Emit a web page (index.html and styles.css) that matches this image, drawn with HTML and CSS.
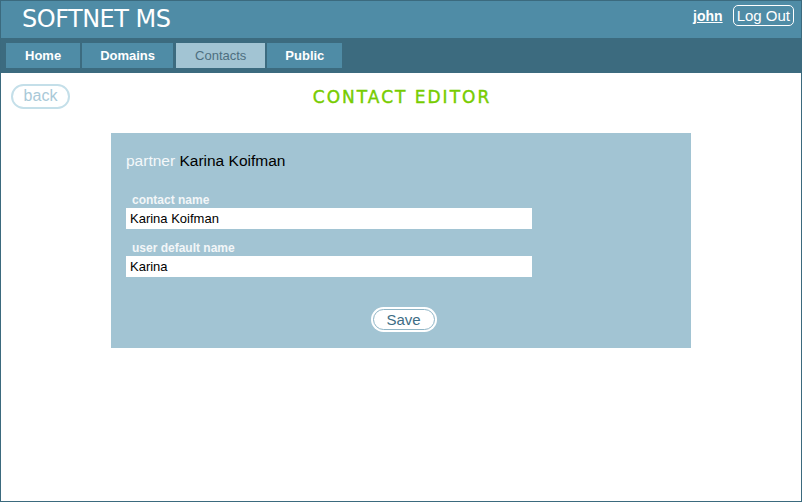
FILE: index.html
```html
<!DOCTYPE html>
<html>
<head>
<meta charset="utf-8">
<title>Softnet MS - Contact Editor</title>
<link rel="stylesheet" href="styles.css">
</head>
<body>
<div class="frame">
  <header class="topbar">
    <div class="brand">SOFTNET MS</div>
    <div class="user">
      <a class="user-name" href="#">john</a>
      <button class="logout">Log Out</button>
    </div>
  </header>
  <nav class="tabs">
    <a class="tab" href="#">Home</a>
    <a class="tab" href="#">Domains</a>
    <a class="tab active" href="#">Contacts</a>
    <a class="tab" href="#">Public</a>
  </nav>
  <main class="content">
    <div class="titlebar">
      <div class="titlebar-left"><button class="back">back</button></div>
      <h1 class="page-title">CONTACT EDITOR</h1>
      <div class="titlebar-right"></div>
    </div>
    <section class="panel">
      <div class="partner"><span class="partner-label">partner</span> Karina Koifman</div>
      <div class="fields">
        <div class="field">
          <label class="field-label">contact name</label>
          <input class="field-input" type="text" value="Karina Koifman">
        </div>
        <div class="field">
          <label class="field-label">user default name</label>
          <input class="field-input" type="text" value="Karina">
        </div>
      </div>
      <div class="actions">
        <button class="save">Save</button>
      </div>
    </section>
  </main>
</div>
</body>
</html>
```

FILE: styles.css
```css
* { box-sizing: border-box; }
html, body { margin: 0; padding: 0; }
body {
  font-family: "Liberation Sans", Arial, sans-serif;
  background: #ffffff;
}
.frame {
  width: 802px;
  height: 502px;
  border: 1px solid #3b6a7e;
  display: flex;
  flex-direction: column;
}
.topbar {
  height: 37px;
  background: #4f8ca6;
  display: flex;
  justify-content: space-between;
  align-items: flex-start;
  padding: 0 7px 0 21px;
}
.brand {
  font-family: "DejaVu Sans", Verdana, sans-serif;
  font-size: 24px;
  letter-spacing: -0.5px;
  line-height: 37px;
  color: #ffffff;
}
.user {
  display: flex;
  align-items: center;
  gap: 10px;
  margin-top: 4px;
}
.user-name {
  color: #ffffff;
  font-weight: bold;
  font-size: 14px;
  text-decoration: underline;
}
.logout {
  font-family: "Liberation Sans", Arial, sans-serif;
  font-size: 15px;
  color: #ffffff;
  background: transparent;
  border: 1px solid #ffffff;
  border-radius: 5px;
  height: 21px;
  padding: 0 3px;
  line-height: 17px;
}
.tabs {
  height: 35px;
  background: #3c6b7f;
  display: flex;
  gap: 2px;
  padding: 5px 5px;
}
.tab {
  height: 25px;
  line-height: 25px;
  background: #4f8ca6;
  color: #ffffff;
  font-weight: bold;
  font-size: 13px;
  text-decoration: none;
  padding: 0 19px;
}
.tab:nth-child(2) { padding: 0 18px; }
.tab.active {
  background: #a2c4d3;
  color: #4d6f80;
  font-weight: normal;
  padding: 0 19px;
  margin-left: 1px;
}
.tab:nth-child(4) { padding: 0 18px; }
.content {
  flex: 1;
  background: #ffffff;
}
.titlebar {
  display: grid;
  grid-template-columns: 1fr auto 1fr;
  align-items: center;
  padding: 10px 10px 0 10px;
}
.back {
  font-family: "Liberation Sans", Arial, sans-serif;
  font-size: 16px;
  color: #a9c9d8;
  background: #ffffff;
  border: 2px solid #c4dfe9;
  border-radius: 13px;
  height: 25px;
  width: 59px;
  padding: 0;
  line-height: 20px;
}
.page-title {
  margin: 0;
  font-family: "DejaVu Sans", Verdana, sans-serif;
  font-weight: normal;
  font-size: 17px;
  letter-spacing: 2px;
  -webkit-text-stroke: 0.4px #77cc00;
  color: #77cc00;
  line-height: 24px;
  padding-top: 2px;
  padding-left: 2px;
}
.panel {
  width: 580px;
  margin: 24px auto 0;
  background: #a2c4d3;
  padding: 18px 15px 16px 15px;
}
.partner {
  font-size: 15.5px;
  line-height: 20px;
  color: #000000;
}
.partner-label {
  color: #f4f8fa;
}
.fields {
  margin-top: 21px;
  display: flex;
  flex-direction: column;
  gap: 11px;
  width: 406px;
}
.field {
  display: flex;
  flex-direction: column;
}
.field-label {
  font-size: 12px;
  font-weight: bold;
  color: #f2f6f8;
  line-height: 16px;
  padding-left: 6px;
}
.field-input {
  height: 21px;
  border: none;
  background: #ffffff;
  font-family: "Liberation Sans", Arial, sans-serif;
  font-size: 13px;
  color: #000000;
  padding: 0 4px;
  outline: none;
}
.actions {
  margin-top: 30px;
  display: flex;
  justify-content: center;
  padding-left: 5px;
}
.save {
  font-family: "Liberation Sans", Arial, sans-serif;
  font-size: 15px;
  color: #3d6d85;
  background: #ffffff;
  border: 1px solid #8fb5c6;
  box-shadow: 0 0 0 2px #ffffff;
  border-radius: 12px;
  height: 21px;
  width: 62px;
  padding: 0;
  line-height: 19px;
  margin: 2px 0;
}
```
